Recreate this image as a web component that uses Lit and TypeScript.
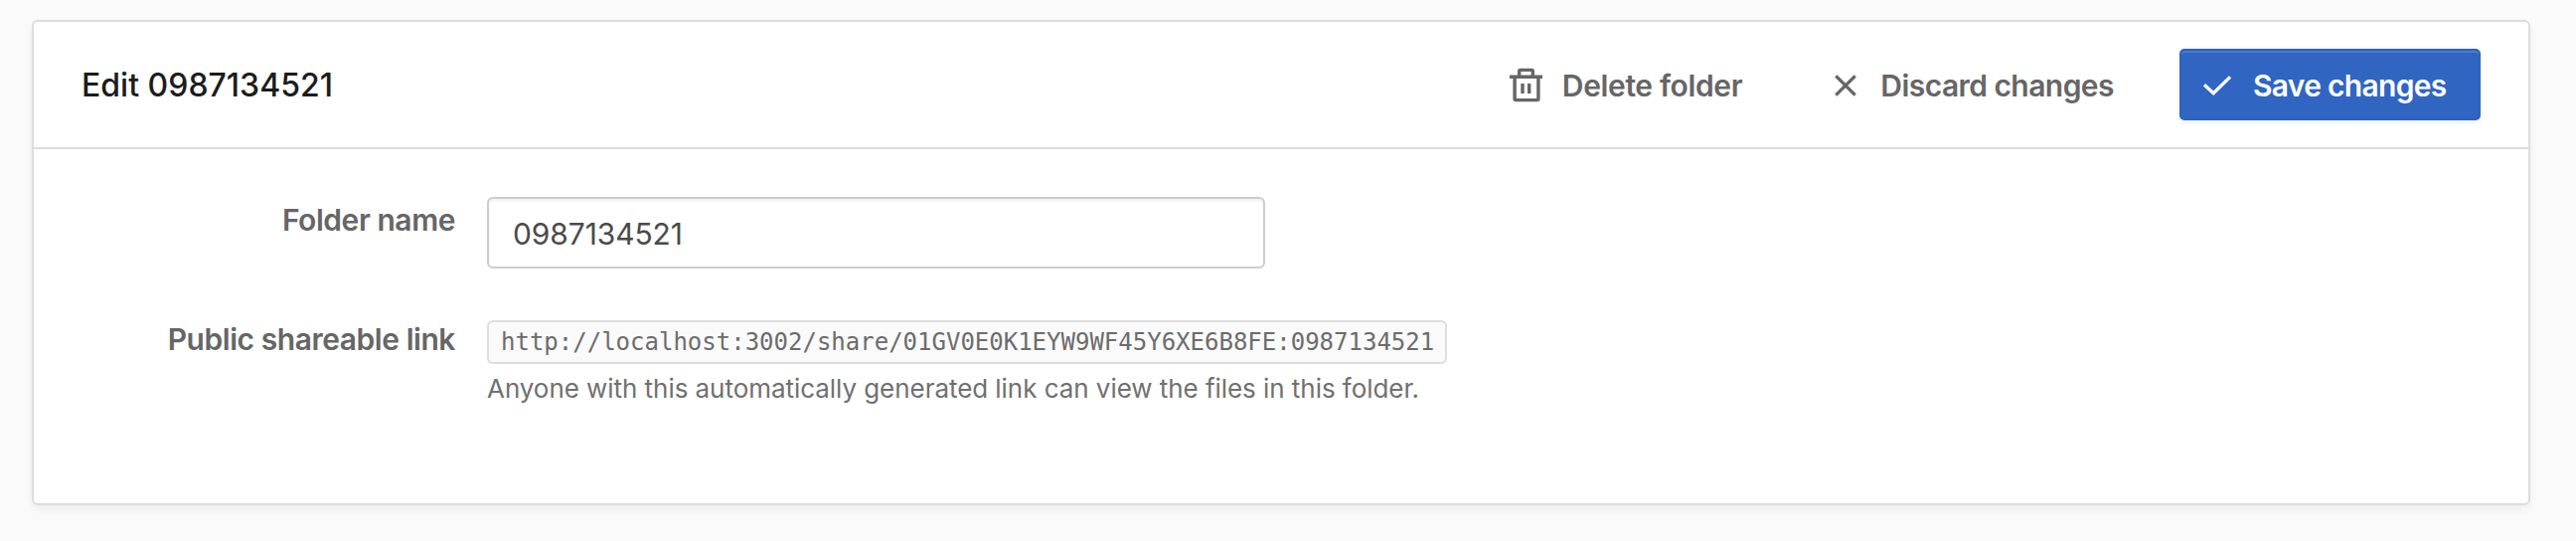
import { LitElement, html, css } from "lit";
import { customElement, property } from "lit/decorators.js";

@customElement("app-root")
export class AppRoot extends LitElement {
  @property() name = "0987134521";

  static styles = css`
    :host {
      display: block;
      box-sizing: border-box;
      height: 544px;
      padding: 20px 46px 36px 32px;
      background: #fafafa;
      font-family: Inter, "Liberation Sans", sans-serif;
      font-size: 30px;
      color: #666;
    }
    * { box-sizing: border-box; }
    .card {
      height: 488px;
      background: #fff;
      border: 2px solid #ddd;
      border-radius: 6px;
      box-shadow: 0 4px 8px rgba(0, 0, 0, 0.06);
    }
    .head {
      height: 128px;
      padding: 0 48px;
      display: flex;
      align-items: center;
      border-bottom: 2px solid #ddd;
    }
    h1 {
      margin: 0 auto 0 0;
      padding-top: 2px;
      font-size: 32px;
      line-height: 40px;
      font-weight: 540;
      letter-spacing: 0;
      color: #1c1c1c;
    }
    button {
      font: inherit;
      font-weight: 570;
      letter-spacing: -0.55px;
      line-height: 40px;
      color: #666;
      height: 72px;
      display: flex;
      align-items: center;
      background: none;
      border: 0;
      padding: 2px 0 0;
      white-space: nowrap;
    }
    svg { display: block; flex: none; fill: none; stroke: currentColor; }
    .delete { gap: 18px; margin-right: 92px; letter-spacing: -0.35px; }
    .discard { gap: 23px; margin-right: 66px; }
    .save {
      width: 303px;
      padding: 2px 0 0 21px;
      gap: 21px;
      color: #fff;
      letter-spacing: -0.7px;
      background: #3065c2;
      border: 2px solid #2d62bf;
      border-radius: 5px;
      box-shadow: inset 0 2px 0 rgba(255, 255, 255, 0.15), 0 2px 4px rgba(0, 0, 0, 0.07);
    }
    .body {
      display: grid;
      grid-template-columns: 424px 966px;
      column-gap: 32px;
      padding-top: 48px;
    }
    .label {
      text-align: right;
      font-weight: 570;
      letter-spacing: -0.45px;
      line-height: 40px;
      white-space: nowrap;
    }
    .name-label { padding-top: 3px; }
    .link-label { line-height: 38px; }
    input {
      display: block;
      width: 783px;
      height: 72px;
      margin: 0 0 52px;
      padding: 2px 24px 0;
      font: inherit;
      font-weight: 430;
      letter-spacing: -0.1px;
      color: #4a4a4a;
      background: #fff;
      border: 2px solid #ccc;
      border-radius: 6px;
      box-shadow: inset 0 2px 3px rgba(0, 0, 0, 0.06);
    }
    .code {
      display: block;
      height: 44px;
      padding: 0 12px;
      line-height: 41px;
      font-family: "DejaVu Sans Mono", monospace;
      font-size: 24px;
      color: #6c6c6c;
      background: #fafafa;
      border: 2px solid #ddd;
      border-radius: 6px;
      white-space: nowrap;
    }
    .help {
      margin: 7px 0 0;
      font-size: 26px;
      line-height: 36px;
      font-weight: 440;
      letter-spacing: -0.05px;
      color: #707070;
      white-space: nowrap;
    }
  `;

  render() {
    return html`
      <section class="card">
        <header class="head">
          <h1>Edit ${this.name}</h1>
          <button class="delete">
            <svg width="36" height="36" viewBox="0 0 36 36" stroke-width="3.4">
              <path d="M1 9.2H34" />
              <path d="M10.7 9V3.4Q10.7 2.4 11.7 2.4H23.3Q24.3 2.4 24.3 3.4V9" />
              <path d="M6.1 9V31.6Q6.1 32.6 7.1 32.6H28.9Q29.9 32.6 29.9 31.6V9" />
              <path d="M14 16V26M20.7 16V26" />
            </svg>
            <span>Delete folder</span>
          </button>
          <button class="discard">
            <svg width="24" height="24" viewBox="0 0 24 24" stroke-width="3.3">
              <path d="M2.3 2.3L21.7 21.7M21.7 2.3L2.3 21.7" />
            </svg>
            <span>Discard changes</span>
          </button>
          <button class="save">
            <svg width="30" height="22" viewBox="0 0 30 22" stroke-width="3.3">
              <path d="M2 10.2L11.2 18.8L28 2.4" />
            </svg>
            <span>Save changes</span>
          </button>
        </header>
        <div class="body">
          <label class="label name-label" for="name">Folder name</label>
          <div><input id="name" .value=${this.name} /></div>
          <div class="label link-label">Public shareable link</div>
          <div>
            <code class="code">http://localhost:3002/share/01GV0E0K1EYW9WF45Y6XE6B8FE:${this.name}</code>
            <p class="help">Anyone with this automatically generated link can view the files in this folder.</p>
          </div>
        </div>
      </section>
    `;
  }
}
